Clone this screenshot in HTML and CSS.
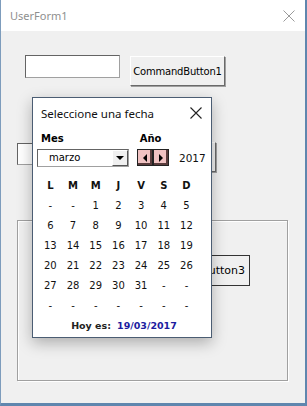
FILE: index.html
```html
<!DOCTYPE html>
<html lang="es">
<head>
    <meta charset="UTF-8">
    <title>UserForm1</title>
    <link rel="stylesheet" href="styles.css">
</head>
<body>
    <div class="window">
        <div class="titlebar">
            <span class="title">UserForm1</span>
            <svg class="win-close" width="12" height="12" viewBox="0 0 12 12">
                <path d="M0.5 0.5 L11.5 11.5 M11.5 0.5 L0.5 11.5" stroke="#9a9a9a" stroke-width="1" fill="none"/>
            </svg>
        </div>

        <div class="form">
            <div class="row row-top">
                <div class="textbox tb1"></div>
                <button class="cmd cmd1">CommandButton1</button>
            </div>

            <div class="row row-mid">
                <div class="textbox tb2"></div>
                <button class="cmd cmd2"></button>
            </div>

            <div class="frame">
                <button class="cmd cmd3">Button3</button>
            </div>
        </div>

        <!-- date picker popup, floats over the form -->
        <div class="popup">
            <div class="popup-head">
                <span>Seleccione una fecha</span>
                <svg width="12" height="12" viewBox="0 0 12 12">
                    <path d="M0.5 0.5 L11.5 11.5 M11.5 0.5 L0.5 11.5" stroke="#222" stroke-width="1.1" fill="none"/>
                </svg>
            </div>

            <div class="labels">
                <span class="lbl-mes">Mes</span>
                <span class="lbl-ano">Año</span>
            </div>

            <div class="controls">
                <div class="combo">
                    <span class="combo-text">marzo</span>
                    <span class="combo-btn"><i class="tri-down"></i></span>
                </div>
                <div class="spin">
                    <span class="spin-btn"><i class="tri-left"></i></span>
                    <span class="spin-btn"><i class="tri-right"></i></span>
                </div>
                <span class="year">2017</span>
            </div>

            <div class="cal">
                <b>L</b><b>M</b><b>M</b><b>J</b><b>V</b><b>S</b><b>D</b>
                <span>-</span><span>-</span><span>1</span><span>2</span><span>3</span><span>4</span><span>5</span>
                <span>6</span><span>7</span><span>8</span><span>9</span><span>10</span><span>11</span><span>12</span>
                <span>13</span><span>14</span><span>15</span><span>16</span><span>17</span><span>18</span><span>19</span>
                <span>20</span><span>21</span><span>22</span><span>23</span><span>24</span><span>25</span><span>26</span>
                <span>27</span><span>28</span><span>29</span><span>30</span><span>31</span><span>-</span><span>-</span>
                <span>-</span><span>-</span><span>-</span><span>-</span><span>-</span><span>-</span><span>-</span>
            </div>

            <div class="today">
                <b>Hoy es:</b>
                <b class="today-date">19/03/2017</b>
            </div>
        </div>
    </div>
</body>
</html>
```

FILE: styles.css
```css
body {
    margin: 0;
    font-family: "DejaVu Sans", sans-serif;
    background: #ffffff;
}

.window {
    position: relative;
    width: 307px;
    height: 406px;
    box-sizing: border-box;
    border-left: 1px solid #7d9cbc;
    border-right: 2px solid #5f86ae;
    border-bottom: 3px solid #5f86ae;
    background: #f0f0f0;
    overflow: hidden;
}

.titlebar {
    height: 31px;
    background: #ffffff;
    display: flex;
    align-items: center;
    justify-content: space-between;
    padding: 0 10px 0 9px;
}

.title {
    font-family: "Noto Sans", sans-serif;
    font-size: 11px;
    color: #8f8f8f;
}

.win-close {
    margin-top: 1px;
}

.form {
    padding: 24px 0 0 16px;
}

.row {
    display: flex;
    align-items: flex-start;
}

.textbox {
    background: #fff;
    border: 1px solid #a0a0a0;
    border-top-color: #646464;
    border-left-color: #646464;
    box-sizing: border-box;
}

.tb1 {
    width: 95px;
    height: 23px;
    margin-left: 8px;
}

.cmd {
    font-family: "DejaVu Sans", sans-serif;
    font-size: 10px;
    color: #000;
    background: #f0f0f0;
    border: 1px solid #fff;
    border-right-color: #6a6a6a;
    border-bottom-color: #6a6a6a;
    box-shadow: 1px 1px 0 #a0a0a0;
    padding: 0;
    box-sizing: border-box;
}

.cmd1 {
    width: 95px;
    height: 30px;
    margin: 1px 0 0 10px;
    letter-spacing: -0.2px;
}

.row-mid {
    margin-top: 56px;
}

.tb2 {
    width: 94px;
    height: 22px;
    margin-top: 1px;
}

.cmd2 {
    width: 97px;
    height: 30px;
    margin-left: 8px;
}

.frame {
    width: 271px;
    height: 161px;
    margin-top: 48px;
    box-sizing: border-box;
    border: 1px solid #a0a0a0;
    box-shadow: inset 1px 1px 0 #fff, 1px 1px 0 #fff;
    padding: 34px 0 0 120px;
}

.cmd3 {
    width: 112px;
    height: 31px;
    border: 1px solid #333;
    box-shadow: none;
    text-align: right;
    padding-right: 4px;
    font-size: 11px;
}

.popup {
    position: absolute;
    left: 31px;
    top: 97px;
    width: 180px;
    height: 241px;
    box-sizing: border-box;
    background: #fff;
    border: 1px solid #4b5d73;
    box-shadow: 0 5px 14px rgba(0, 0, 0, 0.28);
}

.popup-head {
    height: 30px;
    display: flex;
    align-items: center;
    justify-content: space-between;
    padding: 0 9px 0 8px;
    font-family: "Noto Sans", sans-serif;
    font-size: 11.5px;
    color: #111;
}

.labels {
    display: flex;
    font-size: 10px;
    font-weight: bold;
    height: 18px;
    align-items: center;
    padding-left: 8px;
    margin-top: 1px;
}

.lbl-ano {
    margin-left: 76px;
}

.controls {
    display: flex;
    align-items: center;
    padding-left: 4px;
    margin-top: 1px;
    height: 19px;
}

.combo {
    width: 92px;
    height: 18px;
    box-sizing: border-box;
    border: 1px solid #a0a0a0;
    border-top-color: #646464;
    border-left-color: #646464;
    display: flex;
    align-items: center;
    justify-content: space-between;
    font-size: 10px;
}

.combo-text {
    padding-left: 11px;
}

.combo-btn {
    width: 16px;
    height: 16px;
    box-sizing: border-box;
    background: #f0f0f0;
    border: 1px solid #fff;
    border-right-color: #555;
    border-bottom-color: #555;
    display: flex;
    align-items: center;
    justify-content: center;
}

.tri-down {
    width: 0;
    height: 0;
    border-left: 4px solid transparent;
    border-right: 4px solid transparent;
    border-top: 4px solid #000;
}

.spin {
    display: flex;
    margin-left: 8px;
}

.spin-btn {
    width: 16px;
    height: 17px;
    box-sizing: border-box;
    background: #f0c2c2;
    border: 1px solid #ffffff;
    outline: 1px solid #222;
    outline-offset: -1px;
    box-shadow: inset -2px -2px 0 #5a3c3c;
    display: flex;
    align-items: center;
    justify-content: center;
}

.tri-left,
.tri-right {
    width: 0;
    height: 0;
    border-top: 4px solid transparent;
    border-bottom: 4px solid transparent;
}

.tri-left {
    border-right: 4px solid #000;
}

.tri-right {
    border-left: 4px solid #000;
}

.year {
    font-size: 10.5px;
    margin-left: 10px;
    color: #111;
}

.cal {
    display: grid;
    grid-template-columns: repeat(7, 22.7px);
    grid-auto-rows: 20px;
    margin: 8px 0 0 6px;
    font-size: 10px;
    color: #111;
}

.cal b,
.cal span {
    display: flex;
    align-items: center;
    justify-content: center;
}

.today {
    display: flex;
    justify-content: center;
    align-items: center;
    gap: 6px;
    height: 20px;
    font-size: 9.5px;
    padding-left: 4px;
    color: #222;
}

.today-date {
    color: #1c1ca0;
}
```
